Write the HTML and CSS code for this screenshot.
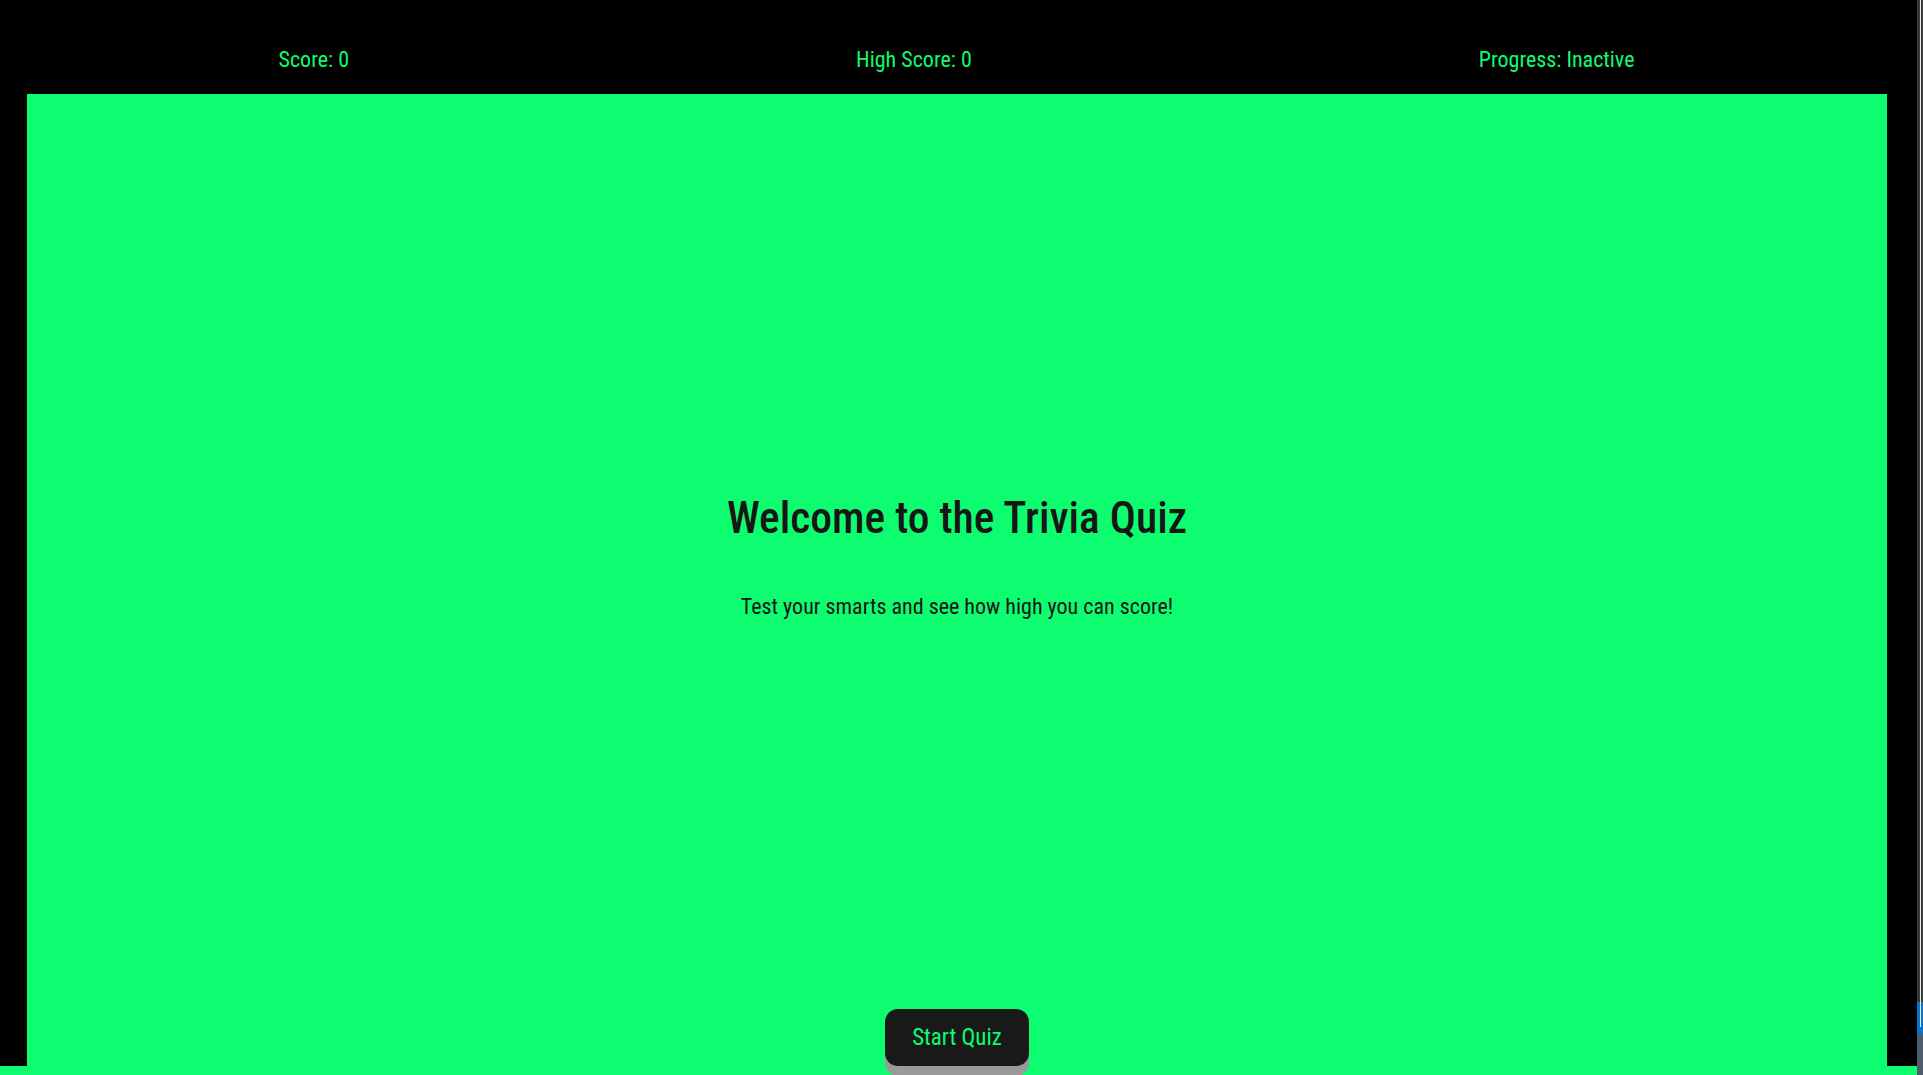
FILE: index.html
```html
<!DOCTYPE html>
<html lang="en">
<head>
<meta charset="utf-8">
<title>Trivia Quiz</title>
<link rel="stylesheet" href="styles.css">
</head>
<body>
<div class="window">
  <div class="page">
    <header class="stats">
      <span class="stat">Score: 0</span>
      <span class="stat">High Score: 0</span>
      <span class="stat">Progress: Inactive</span>
    </header>
    <main class="quiz">
      <section class="intro">
        <h1 class="title">Welcome to the Trivia Quiz</h1>
        <p class="subtitle">Test your smarts and see how high you can score!</p>
      </section>
      <div class="actions">
        <button class="start-btn" type="button">Start Quiz</button>
      </div>
    </main>
    <footer class="footer"></footer>
  </div>
  <div class="edge">
    <div class="edge-track"><div class="edge-line"></div></div>
    <div class="edge-blue"><div class="edge-line short"></div></div>
    <div class="edge-desk"></div>
  </div>
</div>
</body>
</html>
```
FILE: styles.css
```css
html, body {
  margin: 0;
  padding: 0;
  height: 100%;
  overflow: hidden;
  background: #000;
}

body {
  font-family: "Roboto Condensed", Roboto, "Liberation Sans", sans-serif;
  font-stretch: condensed;
}

.window {
  display: flex;
  height: 1075px;
  width: 1923px;
}

.page {
  width: 1917px;
  flex: 0 0 1917px;
  display: flex;
  flex-direction: column;
  background: #000;
}

.stats {
  height: 94px;
  box-sizing: border-box;
  padding: 24px 29px 0 25px;
  display: flex;
  justify-content: space-around;
  align-items: center;
}

.stat {
  color: #0efc70;
  font-size: 22px;
}

.quiz {
  margin: 0 30px 0 27px;
  height: 972px;
  flex: 0 0 972px;
  background: #0efc70;
  display: flex;
  flex-direction: column;
  align-items: center;
}

.intro {
  flex: 1;
  display: flex;
  flex-direction: column;
  align-items: center;
  justify-content: center;
  padding-top: 9px;
}

.title {
  margin: 0;
  font-size: 43.5px;
  font-weight: 500;
  color: #161616;
}

.subtitle {
  margin: 50px 0 0;
  font-size: 22px;
  color: #161616;
}

.actions {
  margin-bottom: 0;
}

.start-btn {
  display: inline-block;
  position: relative;
  z-index: 1;
  height: 57px;
  padding: 0 27px;
  border: 0;
  border-radius: 13px;
  background: #191919;
  color: #0efc70;
  font-family: inherit;
  font-stretch: condensed;
  font-size: 23px;
  box-shadow: 0 10px 0 #9a9a9a;
  cursor: pointer;
}

.footer {
  flex: 1;
  background: #0efc70;
}

.edge {
  width: 6px;
  flex: 0 0 6px;
  display: flex;
  flex-direction: column;
}

.edge-track {
  flex: 0 0 1002px;
  background: #3a3a3a;
  display: flex;
  justify-content: center;
}

.edge-line {
  width: 1px;
  margin-left: 1px;
  background: #e8e8e8;
}

.edge-blue {
  flex: 0 0 32px;
  background: #0a73c8;
  display: flex;
  justify-content: center;
  align-items: flex-start;
}

.edge-line.short {
  height: 25px;
}

.edge-desk {
  flex: 1;
  background: #4d5c6c;
}
```
